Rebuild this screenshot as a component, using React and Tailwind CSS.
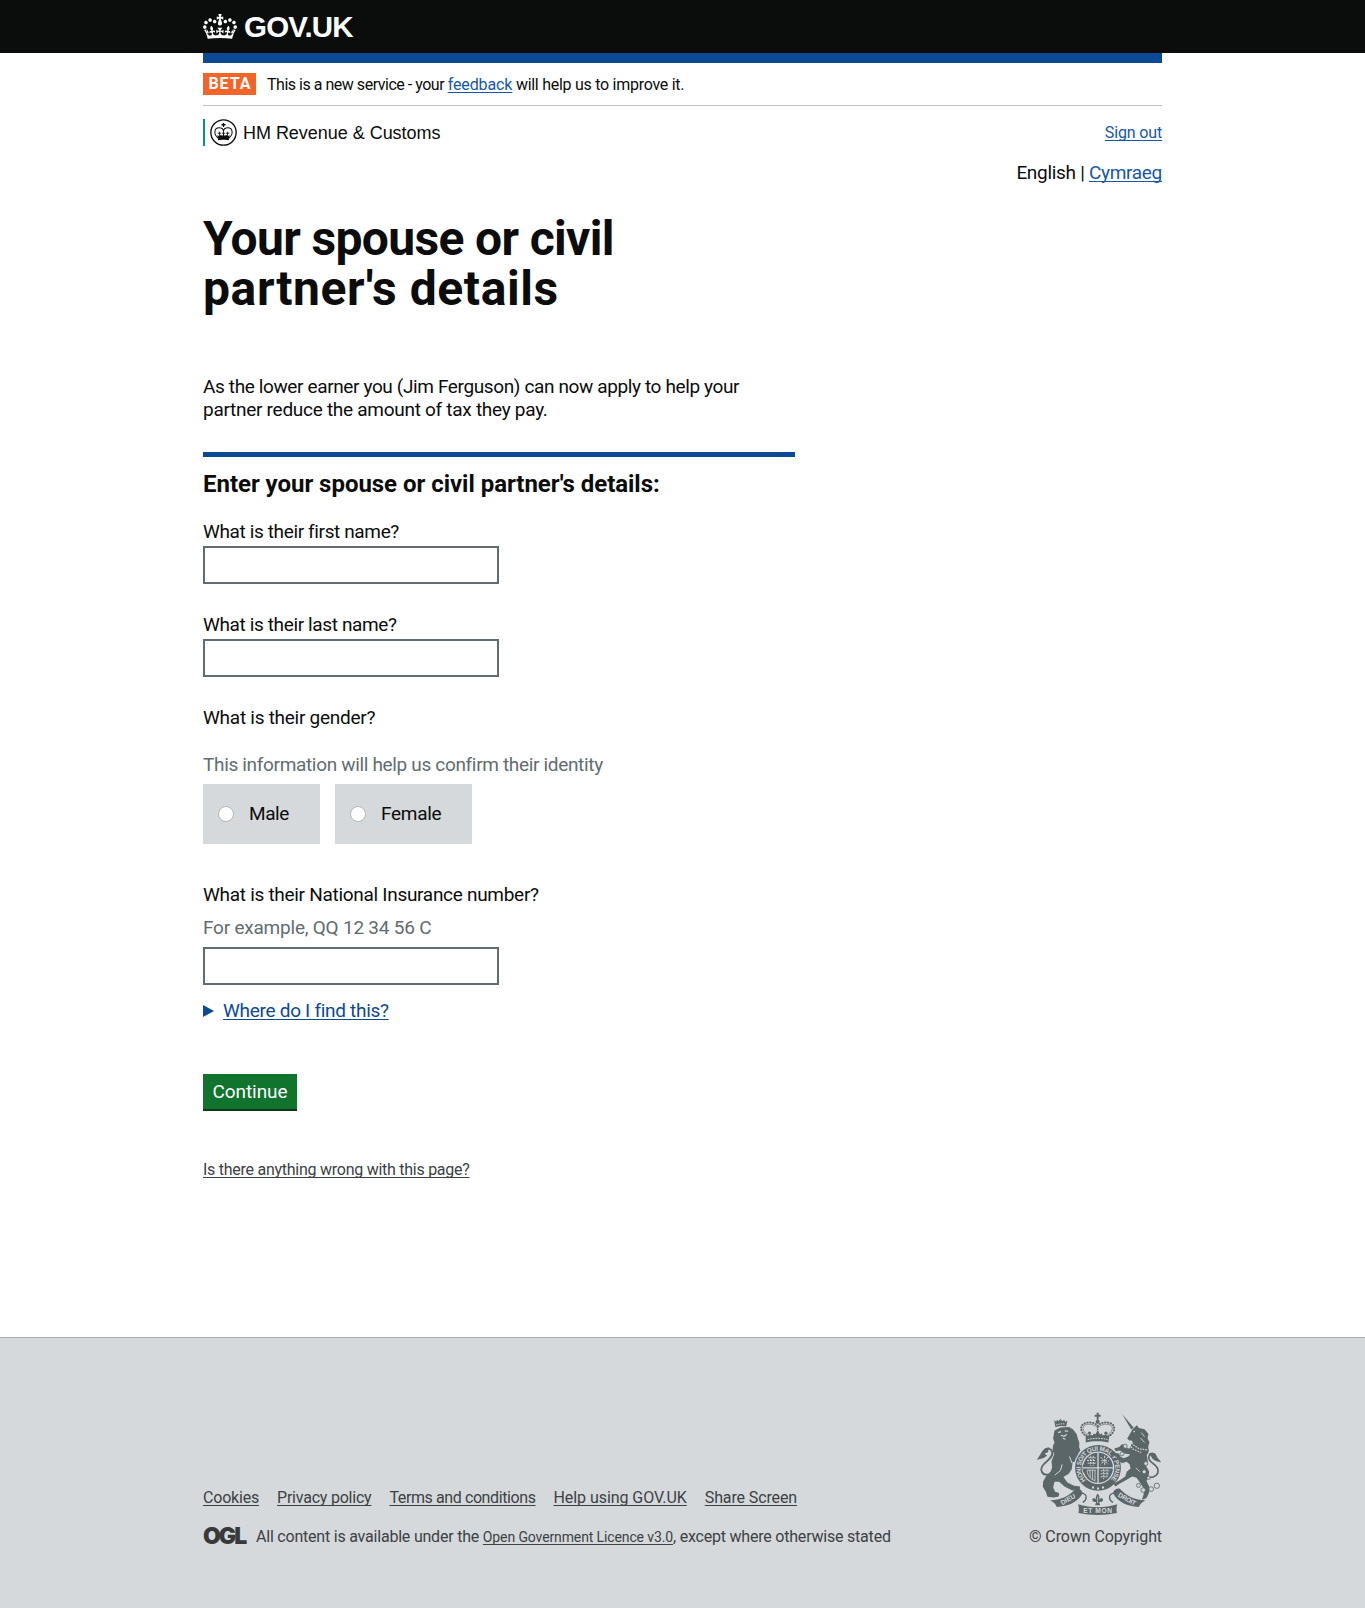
import React from "react";

const CROWN =
  "M25 30.2c3.5 1.5 7.7-.2 9.1-3.7 1.5-3.6-.2-7.8-3.9-9.2-3.6-1.4-7.6.3-9.1 3.9-1.4 3.5.3 7.5 3.9 9zM9 39.5c3.6 1.5 7.8-.2 9.2-3.7 1.5-3.6-.2-7.8-3.9-9.1-3.6-1.5-7.6.2-9.1 3.8-1.4 3.5.3 7.5 3.8 9zM4.4 57.2c3.5 1.5 7.7-.2 9.1-3.8 1.5-3.6-.2-7.7-3.9-9.1-3.5-1.5-7.6.3-9.1 3.8-1.4 3.5.3 7.6 3.9 9.1zm38.3-21.4c3.5 1.5 7.7-.2 9.1-3.8 1.5-3.6-.2-7.7-3.9-9.1-3.6-1.5-7.6.3-9.1 3.8-1.3 3.6.4 7.7 3.9 9.1zm64.4-5.6c-3.6 1.5-7.8-.2-9.1-3.7-1.5-3.6.2-7.8 3.8-9.2 3.6-1.4 7.7.3 9.2 3.9 1.3 3.5-.4 7.5-3.9 9zm15.9 9.3c-3.6 1.5-7.7-.2-9.1-3.7-1.5-3.6.2-7.8 3.7-9.1 3.6-1.5 7.7.2 9.2 3.8 1.5 3.5-.3 7.5-3.8 9zm4.7 17.7c-3.6 1.5-7.8-.2-9.2-3.8-1.5-3.6.2-7.7 3.9-9.1 3.6-1.5 7.7.3 9.2 3.8 1.3 3.5-.4 7.6-3.9 9.1zM89.3 35.8c-3.6 1.5-7.8-.2-9.2-3.8-1.4-3.6.2-7.7 3.9-9.1 3.6-1.5 7.7.3 9.2 3.8 1.4 3.6-.3 7.7-3.9 9.1zM69.7 17.7l8.9 4.7V9.3l-8.9 2.8c-.2-.3-.5-.6-.9-.9L72.4 0H59.6l3.5 11.2c-.3.3-.6.5-.9.9l-8.8-2.8v13.1l8.8-4.7c.3.3.6.7.9.9l-5 15.4v.1c-.2.8-.4 1.6-.4 2.4 0 4.1 3.1 7.5 7 8.1h.2c.3 0 .7.1 1 .1.4 0 .7 0 1-.1h.2c4-.6 7.1-4.1 7.1-8.1 0-.8-.1-1.7-.4-2.4V34l-5.1-15.4c.4-.2.7-.6 1-.9zM66 92.8c16.9 0 32.8 1.1 47.1 3.2 4-16.9 8.9-26.7 14-33.5l-9.6-3.4c1 4.9 1.1 7.2 0 10.2-1.5-1.4-3-4.3-4.2-8.7L108.6 76c2.8-2 5-3.2 7.5-3.3-4.4 9.4-10 11.9-13.6 11.2-4.3-.8-6.3-4.6-5.6-7.9 1-4.7 5.7-5.9 8-.5 4.3-8.7-3-11.4-7.6-8.8 7.1-7.2 7.9-13.5 2.1-21.1-8 6.1-8.1 12.3-4.5 20.8-4.7-5.4-12.1-2.5-9.5 6.2 3.4-5.2 7.9-2 7.2 3.1-.6 4.3-6.4 7.8-13.5 7.2-10.3-.9-10.9-8-11.2-13.8 2.5-.5 7.1 1.8 11 7.3L80.2 60c-4.1 4.4-8 5.3-12.3 5.4 1.4-4.4 8-11.6 8-11.6H55.5s6.4 7.2 7.9 11.6c-4.2-.1-8-1-12.3-5.4l1.4 16.4c3.9-5.5 8.5-7.7 10.9-7.3-.3 5.8-.9 12.8-11.1 13.8-7.2.6-12.9-2.9-13.5-7.2-.7-5 3.8-8.3 7.1-3.1 2.7-8.7-4.6-11.6-9.4-6.2 3.7-8.5 3.6-14.7-4.6-20.8-5.8 7.6-5 13.9 2.2 21.1-4.7-2.6-11.9.1-7.7 8.8 2.3-5.5 7.1-4.2 8.1.5.7 3.3-1.3 7.1-5.7 7.9-3.5.7-9-1.8-13.5-11.2 2.5.1 4.7 1.3 7.5 3.3l-4.7-15.4c-1.2 4.4-2.7 7.2-4.3 8.7-1.1-3-.9-5.3 0-10.2l-9.5 3.4c5 6.9 9.9 16.7 14 33.5 14.8-2.1 30.8-3.2 47.7-3.2z";

const linkBase =
  "underline decoration-1 underline-offset-2 [text-decoration-skip-ink:none]";

function Roundel() {
  return (
    <svg viewBox="0 0 80 80" className="size-[27px]" fill="none" stroke="#0b0c0c">
      <circle cx="40" cy="40" r="37.5" strokeWidth="4" />
      <path d="M40 12v12M34 17h12" strokeWidth="4" />
      <path
        d="M24 57C9 44 13 26 27 26c7 0 12 4 13 9 1-5 6-9 13-9 14 0 18 18 3 31"
        strokeWidth="3"
      />
      <path d="M40 34v20" strokeWidth="2.5" />
      <path d="M28 38v16M52 38v16M23 42h10M47 42h10M35 42h10" strokeWidth="2.5" />
      <path
        d="M22 49l6 3 4-5 4 4 4-6 4 6 4-4 4 5 6-3-3 11H25z"
        fill="#0b0c0c"
        strokeWidth="1"
      />
      <path d="M24 61c10-2.500 22-2.500 32 0" strokeWidth="4" />
    </svg>
  );
}

function RoyalArms() {
  const ink = "#5b6669";
  const paper = "#d5d9dc";
  return (
    <svg viewBox="50 36 378 310" className="h-[103px] w-[126px]" aria-hidden="true">
      {/* central crown */}
      <path d="M232 38h6v6h6v6h-6v9h-6v-9h-6v-6h6z" fill={ink} />
      <circle cx="235" cy="65" r="6" fill={ink} />
      <g fill="none" stroke={ink} strokeLinecap="round">
        <path d="M203 110C180 96 178 72 204 68c14-2 27 3 31 10 4-7 17-12 31-10 26 4 24 28 1 42" strokeWidth="6" strokeDasharray="1 7.500" />
        <path d="M206 106c-20-14-20-30-2-33 14-2 25 4 31 11 6-7 17-13 31-11 18 3 18 19-2 33" strokeWidth="2" />
        <path d="M235 80v18" strokeWidth="5" strokeDasharray="1 7" />
      </g>
      <path d="M199 104l7 5 3-5-5-5 6-5 6 5-4 6 8 1 4-6 4 4 7-13 7 13 4-4 4 6 8-1-4-6 6-5 6 5-5 5 3 5 7-5-4 24c-20-5-48-5-68 0z" fill={ink} />
      <path d="M205 119c19-5 42-5 60 0" fill="none" stroke={paper} strokeWidth="3" strokeDasharray="5 3" />

      {/* lion */}
      <path d="M104 60l6 5 3-6 5 5 5-8 5 8 6-5 3 6 7-3-4 18c-11-3-21-2-32 2z" fill={ink} />
      <path d="M110 75c9-3 18-4 28-3" stroke={paper} strokeWidth="3" fill="none" strokeDasharray="4 3" />
      <path
        d="M105 92l18-9 26-2 12 8 11 14 3 12 5 14-1 12 4 10-6 10 10 12 3 18 8 14-4 12-9 3-7-14-8-18-10-2-3 22-9 14-16 10 12 16 20 10 18 2-1 10-22 2-24-12-16-14-14 0-4 17 6 13 12 4-1 10-16 3-18-2-5-15-9-15 1-16 8-15 15-16 4-12-2-18 8-20-5-14 2-14 4-8-4-12z"
        fill={ink}
      />
      <path d="M116 98l9-3M136 93l10 1M124 106l10 3 8-5M130 115l8 3" stroke={paper} strokeWidth="3.500" fill="none" />
      <path d="M128 194l-5 18-17 14M150 170l8 20" stroke={paper} strokeWidth="3" fill="none" />
      <path d="M88 224c-20 4-30-14-16-30 12-13 30-22 26-38-3-10-13-11-20-8" fill="none" stroke={ink} strokeWidth="5.500" />
      <path d="M90 143c-14-1-20 8-26 18-4 7-8 12-12 19 12-4 25-5 31-14-4-1-6-3-7-6 5 0 9-2 11-6-2-3-1-8 3-11z" fill={ink} />

      {/* garter and shield */}
      <circle cx="236" cy="204" r="59.500" fill="none" stroke={paper} strokeWidth="26" />
      <circle cx="236" cy="204" r="59" fill="none" stroke={ink} strokeWidth="20" />
      <path id="garter" d="M199.900 240.100A51 51 0 1 1 272.100 240.100" transform="translate(-4.720 -4.080) scale(1.020)" fill="none" />
      <text className="font-['Liberation_Sans'] text-[19px] font-bold" fill={paper}>
        <textPath href="#garter" textLength="242">HONI SOIT QUI MAL Y PENSE</textPath>
      </text>
      <circle cx="236" cy="204" r="45" fill={ink} />
      <g fill="none" stroke={paper} strokeWidth="3">
        <path d="M236 159v90M191 204h90" strokeWidth="4" />
        <path d="M203 182h26M205 190h24M207 174h22M214 168v30M222 168v30" strokeDasharray="6 3" />
        <path d="M244 172l22 22M266 172l-22 22M246 183h22M256 168v30" strokeDasharray="7 3" />
        <path d="M244 213h28M244 222h26M244 231h20M253 208v30M263 208v26" strokeDasharray="6 3" />
        <path d="M203 212c2 16 10 27 25 31M211 211l2 22M219 211l1 28M227 211v30M203 211h26" strokeWidth="2.500" />
      </g>
      <path d="M218 260h6v6h-6zM233 263h6v6h-6zM248 260h6v6h-6z" fill={paper} />

      {/* unicorn */}
      <path d="M309 43l34 40-7 6z" fill={ink} />
      <path
        d="M340 88l13-12 6 8 17 4 12 14-3 12 6 14-4 12 2 14-6 12 3 18-5 15 9 16-2 16-6 13 8 16v18l-8 17-14 6 5-16 3-16-12-18-12-17-13-4-17 10-20 11-14 9-5-8 17-10 18-12 5-15 11-9-3-13-9-7-14 4-12-10-4-10-8-3 2-8 12 2 6 10 9 4 14-5 6-6-17-3-14-9-13 2-4-8 15-5 8-8 8 2 4 9 12 2 8-22-8-1-8-7 8-14z"
        fill={ink}
      />
      <circle cx="345" cy="95" r="2.500" fill={paper} />
      <path d="M334 121l8 14 18 12 24 3M330 134l12 14 24 10" fill="none" stroke={paper} strokeWidth="3.500" strokeDasharray="5 3" />
      <path d="M366 98l10 12M364 114l12 14M350 204l12 12" stroke={paper} strokeWidth="2.500" fill="none" />
      <path d="M384 232c22 4 36-8 32-24-4-16-30-20-27-38 2-10 12-12 20-5" fill="none" stroke={ink} strokeWidth="5" />
      <path d="M388 162c12-8 24-2 26 10 4 6 9 9 12 15-10-2-21-4-27-12-3-5-5-8-11-13z" fill={ink} />
      <g fill={paper} stroke={ink} strokeWidth="2.500">
        <circle cx="318" cy="139" r="6" />
        <circle cx="308" cy="162" r="6" />
        <circle cx="380" cy="191" r="6" />
        <circle cx="375" cy="216" r="6" />
        <circle cx="388" cy="234" r="5" />
        <circle cx="358" cy="257" r="6" />
        <circle cx="372" cy="271" r="7" />
        <circle cx="396" cy="268" r="7" />
        <circle cx="413" cy="258" r="8" />
      </g>

      {/* motto ribbon */}
      <path d="M92 302c36-2 58-14 78-36 10-1 18 5 20 14-14 28-44 40-78 42-2-8-10-16-20-20z" fill={ink} />
      <path d="M379 302c-36-2-58-14-78-36-10-1-18 5-20 14 14 28 44 40 78 42 2-8 10-16 20-20z" fill={ink} />
      <path d="M188 280c18 4 14 22 2 28M283 280c-18 4-14 22-2 28" fill="none" stroke={ink} strokeWidth="4" />
      <path d="M176 314c38 12 80 12 118 0-3 10-3 18-1 26-36 8-80 8-116 0 2-8 2-16-1-26z" fill={ink} />
      <g fill={paper} textAnchor="middle" className="font-['Liberation_Sans'] text-[20px] font-bold">
        <text x="0" y="0" transform="translate(149 305) rotate(-29)">DIEU</text>
        <text x="0" y="0" transform="translate(320 304) rotate(30)" textLength="58">DROIT</text>
        <text x="235" y="340" textLength="86">ET MON</text>
      </g>
      <path d="M235 281c7 8 7 14 3 20 5-7 12-7 13-1 1 5-5 8-12 6l4 11h-16l4-11c-7 2-13-1-12-6 1-6 8-6 13 1-4-6-4-12 3-20z" fill={ink} />
      <path d="M235 290v20" stroke={paper} strokeWidth="2" />
    </svg>
  );
}

function TextField({ label, id }) {
  return (
    <div>
      <label htmlFor={id} className="block leading-6 tracking-[-0.37px]">{label}</label>
      <input id={id} className="mt-0.5 block h-[38px] w-[296px] border-2 border-[#626c70] bg-white px-1" />
    </div>
  );
}

function RadioBlock({ label, width, track }) {
  return (
    <label className={`flex h-[60px] items-center bg-[#d5d9dc] pl-[15px] ${width}`}>
      <span className="size-4 rounded-full border border-[#b4b7b9] bg-white" />
      <span className={`ml-[15px] ${track}`}>{label}</span>
    </label>
  );
}

const footerLinks = [
  ["Cookies", "tracking-[-0.2px]"],
  ["Privacy policy", "tracking-[-0.22px]"],
  ["Terms and conditions", "tracking-[-0.4px]"],
  ["Help using GOV.UK", "tracking-[-0.06px]"],
  ["Share Screen", "tracking-[-0.12px]"],
];

export default function App() {
  return (
    <div className="flex min-h-[1608px] flex-col bg-white font-[Roboto,sans-serif] text-[19px] text-[#0b0c0c]">
      <header className="h-[53px] bg-[#0b0c0c]">
        <div className="mx-auto flex h-full w-[959px] items-center text-white">
          <svg viewBox="0 0 132 97" className="h-[25px] w-[34px]" fill="currentColor" aria-hidden="true">
            <path d={CROWN} />
          </svg>
          <span className="ml-[7px] font-['Liberation_Sans'] text-[29.5px] leading-[34px] font-bold tracking-[-0.8px]">GOV.UK</span>
        </div>
      </header>

      <main className="mx-auto w-[959px]">
        <div className="h-[10px] bg-[#0b4994]" />
        <div className="flex h-[43px] items-center border-b border-[#bfc1c3] text-base">
          <strong className="flex h-[22px] w-[53px] items-center justify-center bg-[#f46428] pl-px font-bold leading-5 tracking-[1px] text-white">BETA</strong>
          <p className="ml-[11px] pt-px tracking-[-0.48px]">
            This is a new service - your{" "}
            <a className={`${linkBase} tracking-[-0.1px] text-[#1558a8]`}>feedback</a>{" "}
            <span className="tracking-[-0.27px]">will help us to improve it.</span>
          </p>
        </div>

        <div className="mt-[13px] flex h-[27px] items-center justify-between">
          <div className="flex h-full items-center border-l-2 border-[#009390] pl-[5px]">
            <Roundel />
            <span className="ml-[6px] font-['Liberation_Sans'] text-[18px] leading-6 tracking-[-0.03px]">HM Revenue &amp; Customs</span>
          </div>
          <a className={`${linkBase} text-base tracking-[-0.15px] text-[#1558a8]`}>Sign out</a>
        </div>
        <p className="mt-[15px] text-right leading-6 tracking-[-0.3px]">
          English | <a className={`${linkBase} text-[#1558a8]`}>Cymraeg</a>
        </p>

        <h1 className="mt-[29px] text-[48px] leading-[50px] font-bold">
          <span className="block tracking-[-0.65px]">Your spouse or civil</span>
          <span className="block tracking-[0.6px]">partner&#39;s details</span>
        </h1>

        <div className="mt-[61px] w-[592px]">
          <p className="leading-[23px]">
            <span className="block tracking-[-0.375px]">As the lower earner you (Jim Ferguson) can now apply to help your</span>
            <span className="block tracking-[-0.28px]">partner reduce the amount of tax they pay.</span>
          </p>
          <div className="mt-[31px] h-[5px] bg-[#0b4994]" />
          <h2 className="mt-3 text-2xl leading-[30px] font-bold tracking-[-0.03px]">Enter your spouse or civil partner&#39;s details:</h2>

          <form className="mt-[21px]">
            <div className="flex flex-col gap-[29px]">
              <TextField id="first-name" label="What is their first name?" />
              <TextField id="last-name" label="What is their last name?" />
              <p className="leading-6 tracking-[-0.26px]">What is their gender?</p>
            </div>
            <p className="mt-[23px] leading-6 tracking-[-0.33px] text-[#626c70]">This information will help us confirm their identity</p>
            <div className="mt-[7px] flex gap-[15px]">
              <RadioBlock label="Male" width="w-[117px]" track="tracking-[-0.4px]" />
              <RadioBlock label="Female" width="w-[137px]" track="tracking-[-0.3px]" />
            </div>

            <label htmlFor="nino" className="mt-[39px] block leading-6 tracking-[-0.29px]">What is their National Insurance number?</label>
            <p className="mt-[9px] leading-6 tracking-[-0.22px] text-[#626c70]">For example, QQ 12 34 56 C</p>
            <input id="nino" className="mt-[7px] block h-[38px] w-[296px] border-2 border-[#626c70] bg-white px-1" />

            <div className="mt-[14px] flex items-center leading-6 text-[#0b4994]">
              <svg viewBox="0 0 11 12" className="h-3 w-[11px]" fill="currentColor" aria-hidden="true">
                <path d="M0 0l11 6-11 6z" />
              </svg>
              <span className={`${linkBase} ml-[9px] tracking-[-0.29px]`}>Where do I find this?</span>
            </div>

            <button type="button" className="mt-[51px] flex h-[37px] w-[94px] items-center justify-center border-b-2 border-[#0a3b19] bg-[#10732e] pt-px tracking-[-0.07px] text-white">Continue</button>
          </form>

          <a className={`${linkBase} mt-[49px] block leading-5 text-base tracking-[-0.26px] text-[#3c4144]`}>Is there anything wrong with this page?</a>
        </div>
      </main>

      <footer className="mt-[157px] flex-1 border-t border-[#a1acb2] bg-[#d5d9dc] text-base leading-5 text-[#3c4144]">
        <div className="mx-auto flex w-[959px] items-end justify-between pt-[74px]">
          <div>
            <nav className="flex gap-[18px]">
              {footerLinks.map(([label, track]) => (
                <a key={label} className={`${linkBase} ${track}`}>{label}</a>
              ))}
            </nav>
            <div className="mt-[19px] flex items-center">
              <span className="mr-[10px] h-5 w-[43px] font-[Inter] text-[23px] leading-[18px] font-black tracking-[-2px] text-[#37393b]">OGL</span>
              <p className="tracking-[-0.21px]">
                All content is available under the{" "}
                <a className={`${linkBase} text-sm leading-5 tracking-[-0.12px]`}>Open Government Licence v3.0</a>
                , except where otherwise stated
              </p>
            </div>
          </div>
          <div className="flex flex-col items-end">
            <RoyalArms />
            <p className="mt-3 tracking-[-0.09px]">© Crown Copyright</p>
          </div>
        </div>
      </footer>
    </div>
  );
}
